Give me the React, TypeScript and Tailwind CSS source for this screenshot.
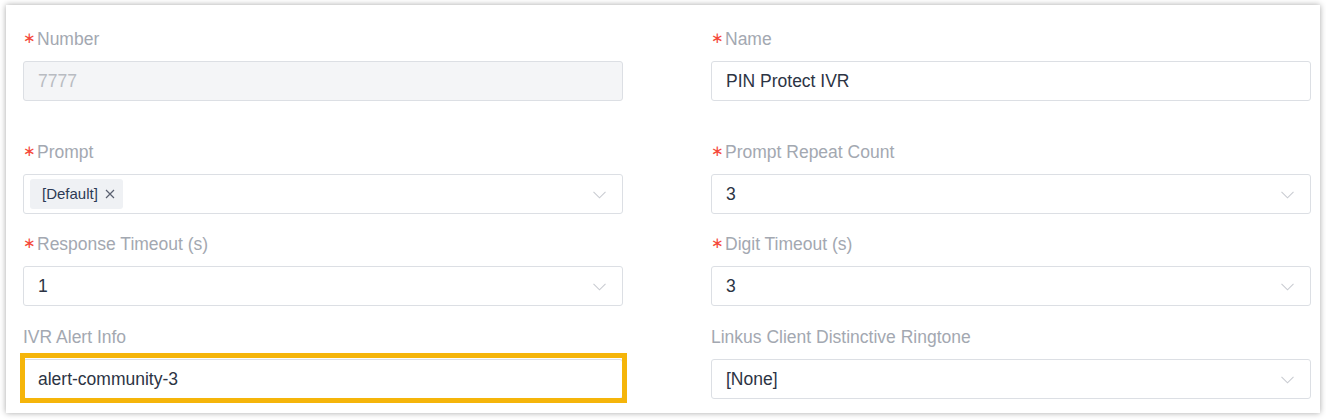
import React from "react";

const font = { fontFamily: '"Liberation Sans", Arial, sans-serif' };

function Chevron() {
  return (
    <svg width="13" height="8" viewBox="0 0 13 8" className="absolute right-[16px] top-[16px]">
      <polyline points="0.5,0.8 6.5,6.8 12.5,0.8" fill="none" stroke="#c9ccd2" strokeWidth="1.1" />
    </svg>
  );
}

function Label({ text, req }: { text: string; req?: boolean }) {
  return (
    <div className="h-[24px] mb-[10px] flex items-center text-[17.5px] leading-[24px] text-[#a3a8b1]">
      {req && (
        <span
          className="w-[14px] shrink-0 text-[#f5483b] text-[15px] leading-[15px] pb-[2px]"
          style={{ fontFamily: '"DejaVu Sans", sans-serif' }}
        >
          ∗
        </span>
      )}
      <span>{text}</span>
    </div>
  );
}

function Input({ value, disabled, select }: { value?: string; disabled?: boolean; select?: boolean }) {
  return (
    <div
      className={
        "relative h-[40px] w-[600px] rounded-[3px] border border-[#dcdfe4] flex items-center pl-[14px] text-[17.5px] " +
        (disabled ? "bg-[#f4f5f7] text-[#b9bcc2]" : "bg-white text-[#2c3444]")
      }
    >
      {value}
      {select && <Chevron />}
    </div>
  );
}

export default function App() {
  return (
    <div className="w-[1326px] h-[420px] bg-white pt-[5px] pl-[6px]" style={font}>
      <div className="w-[1314px] h-[408px] bg-white shadow-[0_0_6px_rgba(0,0,0,0.35)] pl-[17px] pt-[22px]">
        <div className="flex gap-x-[88px] mb-[39px]">
          <div>
            <Label text="Number" req />
            <Input value="7777" disabled />
          </div>
          <div>
            <Label text="Name" req />
            <Input value="PIN Protect IVR" />
          </div>
        </div>
        <div className="flex gap-x-[88px] mb-[18px]">
          <div>
            <Label text="Prompt" req />
            <div className="relative h-[40px] w-[600px] rounded-[3px] border border-[#dcdfe4] bg-white flex items-center pl-[6px]">
              <div className="h-[30px] pl-[12px] pr-[8px] rounded-[3px] bg-[#eff1f4] flex items-center text-[15px] text-[#2c3a55]">
                <span>[Default]</span>
                <svg width="10" height="10" viewBox="0 0 10 10" className="ml-[7px]">
                  <path d="M1 1 L9 9 M9 1 L1 9" stroke="#5a6070" strokeWidth="1.2" />
                </svg>
              </div>
              <Chevron />
            </div>
          </div>
          <div>
            <Label text="Prompt Repeat Count" req />
            <Input value="3" select />
          </div>
        </div>
        <div className="flex gap-x-[88px] mb-[19px]">
          <div>
            <Label text="Response Timeout (s)" req />
            <Input value="1" select />
          </div>
          <div>
            <Label text="Digit Timeout (s)" req />
            <Input value="3" select />
          </div>
        </div>
        <div className="flex gap-x-[88px]">
          <div>
            <Label text="IVR Alert Info" />
            <div className="relative">
              <Input value="alert-community-3" />
              <div className="absolute left-[-3px] top-[-6px] w-[607px] h-[50px] border-[5px] border-[#f5b50a] pointer-events-none" />
            </div>
          </div>
          <div>
            <Label text="Linkus Client Distinctive Ringtone" />
            <Input value="[None]" select />
          </div>
        </div>
      </div>
    </div>
  );
}
